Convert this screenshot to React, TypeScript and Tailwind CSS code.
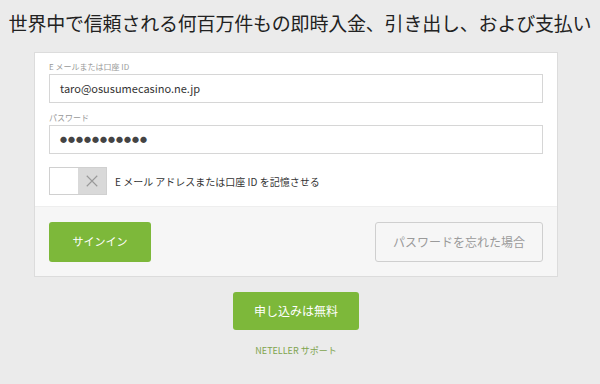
export default function App() {
  const font = { fontFamily: '"Noto Sans CJK JP", "Liberation Sans", sans-serif' }

  return (
    <div className="w-[600px] h-[384px] bg-[#ebebeb] flex flex-col items-center overflow-hidden" style={font}>
      {/* Headline */}
      <h1 className="mt-[10px] h-[25px] text-[19px] leading-[25px] text-[#222] tracking-[-0.2px] whitespace-nowrap">
        世界中で信頼される何百万件もの即時入金、引き出し、および支払い
      </h1>

      {/* Login card */}
      <div className="mt-[17px] w-[524px] ml-[-8px] bg-white border border-[#dcdcdc]">
        <div className="px-[14px] pt-[8px] pb-[11px] flex flex-col">
          <label className="text-[8px] leading-[12px] text-[#999]">E メールまたは口座 ID</label>
          <div className="mt-[1px] h-[29px] border border-[#d6d6d6] flex items-center px-[10px] text-[11px] text-[#333]">
            taro@osusumecasino.ne.jp
          </div>

          <label className="mt-[9px] text-[8px] leading-[12px] text-[#999]">パスワード</label>
          <div className="mt-[1px] h-[29px] border border-[#d6d6d6] flex items-center px-[10px] text-[7px] text-[#444] tracking-[1px]">
            ●●●●●●●●●●●
          </div>

          <div className="mt-[13px] flex items-center gap-[8px]">
            <div className="w-[58px] h-[28px] flex border border-[#d0d0d0]">
              <div className="flex-1 bg-white" />
              <div className="flex-1 bg-[#d9d9d9] flex items-center justify-center">
                <svg viewBox="0 0 16 16" className="w-[14px] h-[14px]" fill="none" stroke="#999" strokeWidth={1.3}>
                  <path d="M2 2L14 14M14 2L2 14" />
                </svg>
              </div>
            </div>
            <span className="text-[10px] text-[#333]">E メール アドレスまたは口座 ID を記憶させる</span>
          </div>
        </div>

        {/* Footer */}
        <div className="h-[70px] bg-[#f6f6f6] border-t border-[#eeeeee] px-[14px] flex items-center justify-between">
          <button className="w-[102px] h-[40px] rounded-[3px] bg-[#7db83a] text-white text-[11px]">
            サインイン
          </button>
          <button className="w-[168px] h-[40px] rounded-[3px] border border-[#cfcfcf] bg-[#f6f6f6] text-[#9a9a9a] text-[12px]">
            パスワードを忘れた場合
          </button>
        </div>
      </div>

      <button className="mt-[15px] ml-[-8px] w-[126px] h-[38px] rounded-[3px] bg-[#7db83a] text-white text-[12px]">
        申し込みは無料
      </button>

      <a className="mt-[14px] ml-[-8px] text-[9px] text-[#7fa44e]">NETELLER サポート</a>
    </div>
  )
}
